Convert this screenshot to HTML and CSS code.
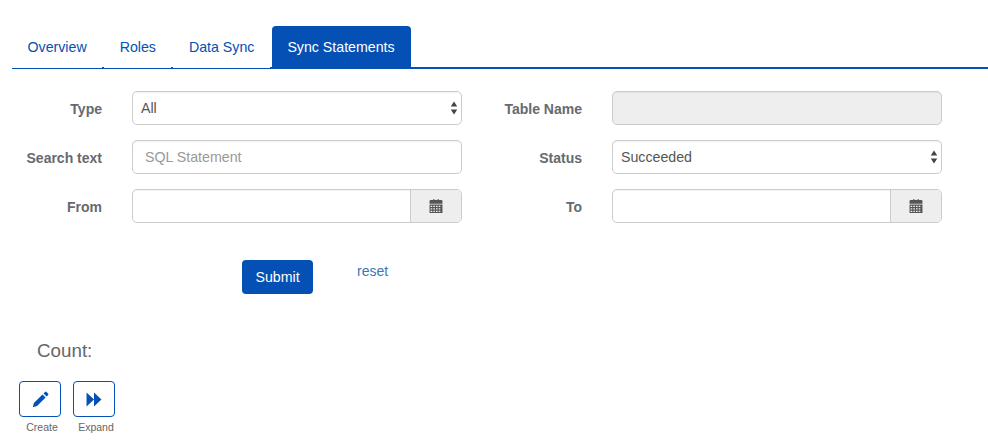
FILE: index.html
```html
<!DOCTYPE html>
<html lang="en">
<head>
<meta charset="utf-8">
<title>Sync Statements</title>
<link rel="stylesheet" href="styles.css">
</head>
<body>
<nav class="tabs">
  <a class="tab">Overview</a>
  <a class="tab">Roles</a>
  <a class="tab">Data Sync</a>
  <a class="tab active">Sync Statements</a>
</nav>
<form class="form">
  <label class="lbl">Type</label>
  <div class="ctl select"><span>All</span>
    <svg class="updown" viewBox="0 0 7 13" width="8" height="14"><path d="M3.5 0.5L6.5 5H0.5Z"/><path d="M0.5 8H6.5L3.5 12.5Z"/></svg>
  </div>
  <label class="lbl">Table Name</label>
  <div class="ctl disabled"></div>

  <label class="lbl">Search text</label>
  <div class="ctl placeholder"><span>SQL Statement</span></div>
  <label class="lbl">Status</label>
  <div class="ctl select"><span>Succeeded</span>
    <svg class="updown" viewBox="0 0 7 13" width="8" height="14"><path d="M3.5 0.5L6.5 5H0.5Z"/><path d="M0.5 8H6.5L3.5 12.5Z"/></svg>
  </div>

  <label class="lbl">From</label>
  <div class="ctl group"><div class="grow"></div><div class="addon">
    <svg viewBox="0 0 13 13" width="14" height="14"><path class="cal" d="M2 1h2V0h1v1h3V0h1v1h2.500a1 1 0 0 1 1 1v2.500H.5V2a1 1 0 0 1 1-1z"/><path class="cal" fill-rule="evenodd" d="M.5 5.200h12V13H.5zM1.500 6.200v1.300h1.500V6.200zm2.500 0v1.300h1.500V6.200zm2.500 0v1.300H8V6.200zm2.500 0v1.300h1.500V6.200zM1.500 8.500v1.300h1.500V8.500zm2.500 0v1.300h1.500V8.500zm2.500 0v1.300H8V8.500zm2.500 0v1.300h1.500V8.500zM1.500 10.800V12h1.500v-1.200zm2.500 0V12h1.500v-1.200zm2.500 0V12H8v-1.200zm2.500 0V12h1.500v-1.200z"/></svg>
  </div></div>
  <label class="lbl">To</label>
  <div class="ctl group"><div class="grow"></div><div class="addon">
    <svg viewBox="0 0 13 13" width="14" height="14"><path class="cal" d="M2 1h2V0h1v1h3V0h1v1h2.500a1 1 0 0 1 1 1v2.500H.5V2a1 1 0 0 1 1-1z"/><path class="cal" fill-rule="evenodd" d="M.5 5.200h12V13H.5zM1.500 6.200v1.300h1.500V6.200zm2.500 0v1.300h1.500V6.200zm2.500 0v1.300H8V6.200zm2.500 0v1.300h1.500V6.200zM1.500 8.500v1.300h1.500V8.500zm2.500 0v1.300h1.500V8.500zm2.500 0v1.300H8V8.500zm2.500 0v1.300h1.500V8.500zM1.500 10.800V12h1.500v-1.200zm2.500 0V12h1.500v-1.200zm2.500 0V12H8v-1.200zm2.500 0V12h1.500v-1.200z"/></svg>
  </div></div>
</form>
<div class="actions">
  <button class="submit" type="button">Submit</button>
  <a class="reset">reset</a>
</div>
<div class="count">Count:</div>
<div class="tools">
  <div class="tool">
    <div class="toolbtn">
      <svg viewBox="0 0 17 17" width="17" height="17"><path class="ico" d="M10.500 3.400l3.100 3.100L5 15.100 0.800 16.200 1.900 12zM11.500 2.400l1.500-1.500a1 1 0 0 1 1.400 0l1.700 1.700a1 1 0 0 1 0 1.400l-1.500 1.500z"/></svg>
    </div>
    <span>Create</span>
  </div>
  <div class="tool">
    <div class="toolbtn">
      <svg viewBox="0 0 15 14" width="16" height="15"><path class="ico" d="M0.500 0.500L7.500 7L0.500 13.500ZM7.500 0.500L14.500 7L7.500 13.500Z"/></svg>
    </div>
    <span>Expand</span>
  </div>
</div>
</body>
</html>
```

FILE: styles.css
```css
* { box-sizing: border-box; }
html, body { margin: 0; padding: 0; }
body {
  width: 988px;
  height: 440px;
  overflow: hidden;
  background: #fff;
  font-family: "Liberation Sans", Arial, sans-serif;
  font-size: 14px;
  color: #555;
}
.tabs {
  display: flex;
  align-items: flex-end;
  gap: 2px;
  margin: 26px 0 0 12px;
  height: 43px;
  border-bottom: 2px solid #0450b4;
}
.tab {
  padding: 0 15.5px;
  height: 42px;
  line-height: 42px;
  color: #0450b4;
  background: #fff;
  font-size: 14.2px;
  margin-bottom: -1px;
}
.tab.active {
  padding-right: 16.5px;
  background: #0450b4;
  color: #fff;
  border-radius: 4px 4px 0 0;
}
.form {
  display: grid;
  grid-template-columns: 90px 330px 90px 330px;
  grid-auto-rows: 34px;
  column-gap: 30px;
  row-gap: 15px;
  margin: 22px 0 0 12px;
  width: 930px;
}
.lbl {
  display: flex;
  align-items: center;
  justify-content: flex-end;
  padding-top: 2px;
  font-weight: 700;
  color: #666a6e;
  font-size: 14px;
}
.ctl {
  display: flex;
  align-items: center;
  border: 1px solid #ccc;
  border-radius: 5px;
  padding: 0 8px;
  font-size: 14.2px;
  color: #555;
  background: #fff;
  box-shadow: inset 0 1px 1px rgba(0,0,0,.05);
}
.select { justify-content: space-between; padding-right: 3px; }
.updown { fill: #444; }
.disabled { background: #eee; }
.placeholder { color: #999; padding-left: 12px; }
.group { padding: 0; overflow: hidden; }
.grow { flex: 1; }
.addon {
  width: 51px;
  height: 100%;
  background: #eee;
  border-left: 1px solid #ccc;
  display: flex;
  align-items: center;
  justify-content: center;
}
.cal { fill: #555; }
.actions {
  display: flex;
  align-items: flex-start;
  margin: 37px 0 0 242px;
}
.submit {
  width: 71px;
  height: 34px;
  border: 0;
  border-radius: 4px;
  background: #0450b4;
  color: #fff;
  font: 14.2px "Liberation Sans", Arial, sans-serif;
  padding: 0;
}
.reset {
  margin-left: 44px;
  color: #337ab7;
  font-size: 14px;
  line-height: 22px;
}
.count {
  margin: 46px 0 0 37px;
  font-size: 18.8px;
  line-height: 22px;
  color: #666;
}
.tools {
  display: flex;
  gap: 12px;
  margin: 19px 0 0 19px;
}
.tool {
  width: 42px;
  display: flex;
  flex-direction: column;
  align-items: center;
  font-size: 10.5px;
  color: #666;
}
.tool span { margin-top: 3px; padding-left: 4px; line-height: 15px; }
.toolbtn {
  width: 42px;
  height: 36px;
  flex: none;
  border: 1px solid #0450b4;
  border-radius: 4px;
  display: flex;
  align-items: center;
  justify-content: center;
}
.ico { fill: #0450b4; }
```
